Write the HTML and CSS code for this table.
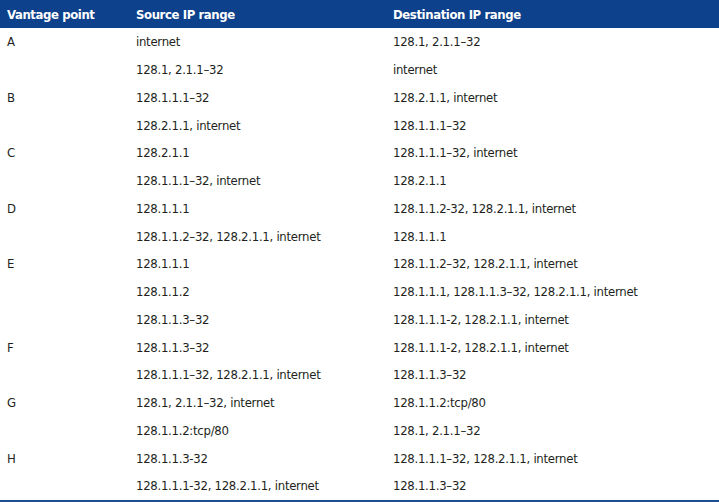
FILE: index.html
```
<!DOCTYPE html>
<html>
<head>
<meta charset="utf-8">
<link rel="stylesheet" href="styles.css">
</head>
<body>
<table class="ip-table">
  <colgroup>
    <col class="c1"><col class="c2"><col class="c3">
  </colgroup>
  <thead>
    <tr><th>Vantage point</th><th>Source IP range</th><th>Destination IP range</th></tr>
  </thead>
  <tbody>
    <tr><td>A</td><td>internet</td><td>128.1, 2.1.1–32</td></tr>
    <tr><td></td><td>128.1, 2.1.1–32</td><td>internet</td></tr>
    <tr><td>B</td><td>128.1.1.1–32</td><td>128.2.1.1, internet</td></tr>
    <tr><td></td><td>128.2.1.1, internet</td><td>128.1.1.1–32</td></tr>
    <tr><td>C</td><td>128.2.1.1</td><td>128.1.1.1–32, internet</td></tr>
    <tr><td></td><td>128.1.1.1–32, internet</td><td>128.2.1.1</td></tr>
    <tr><td>D</td><td>128.1.1.1</td><td>128.1.1.2-32, 128.2.1.1, internet</td></tr>
    <tr><td></td><td>128.1.1.2–32, 128.2.1.1, internet</td><td>128.1.1.1</td></tr>
    <tr><td>E</td><td>128.1.1.1</td><td>128.1.1.2–32, 128.2.1.1, internet</td></tr>
    <tr><td></td><td>128.1.1.2</td><td>128.1.1.1, 128.1.1.3–32, 128.2.1.1, internet</td></tr>
    <tr><td></td><td>128.1.1.3–32</td><td>128.1.1.1-2, 128.2.1.1, internet</td></tr>
    <tr><td>F</td><td>128.1.1.3–32</td><td>128.1.1.1-2, 128.2.1.1, internet</td></tr>
    <tr><td></td><td>128.1.1.1–32, 128.2.1.1, internet</td><td>128.1.1.3–32</td></tr>
    <tr><td>G</td><td>128.1, 2.1.1–32, internet</td><td>128.1.1.2:tcp/80</td></tr>
    <tr><td></td><td>128.1.1.2:tcp/80</td><td>128.1, 2.1.1–32</td></tr>
    <tr><td>H</td><td>128.1.1.3-32</td><td>128.1.1.1–32, 128.2.1.1, internet</td></tr>
    <tr><td></td><td>128.1.1.1-32, 128.2.1.1, internet</td><td>128.1.1.3–32</td></tr>
  </tbody>
</table>
</body>
</html>
```
FILE: styles.css
```
html, body {
  margin: 0;
  padding: 0;
  background: #ffffff;
}
.ip-table {
  width: 719px;
  border-collapse: collapse;
  table-layout: fixed;
  font-family: "DejaVu Sans Condensed", "Liberation Sans", sans-serif;
  font-size: 13px;
  letter-spacing: -0.27px;
  color: #231f20;
  border-bottom: 2px solid #1f4e8f;
}
.c1 { width: 129px; }
.c2 { width: 257px; }
.c3 { width: 333px; }
.ip-table th {
  background: #0d418b;
  color: #ffffff;
  font-weight: bold;
  font-size: 13px;
  letter-spacing: -0.4px;
  text-align: left;
  height: 28px;
  padding: 0 0 0 7px;
  vertical-align: middle;
}
.ip-table td {
  height: 27.75px;
  padding: 0 0 0 7px;
  vertical-align: middle;
  white-space: nowrap;
}
```
